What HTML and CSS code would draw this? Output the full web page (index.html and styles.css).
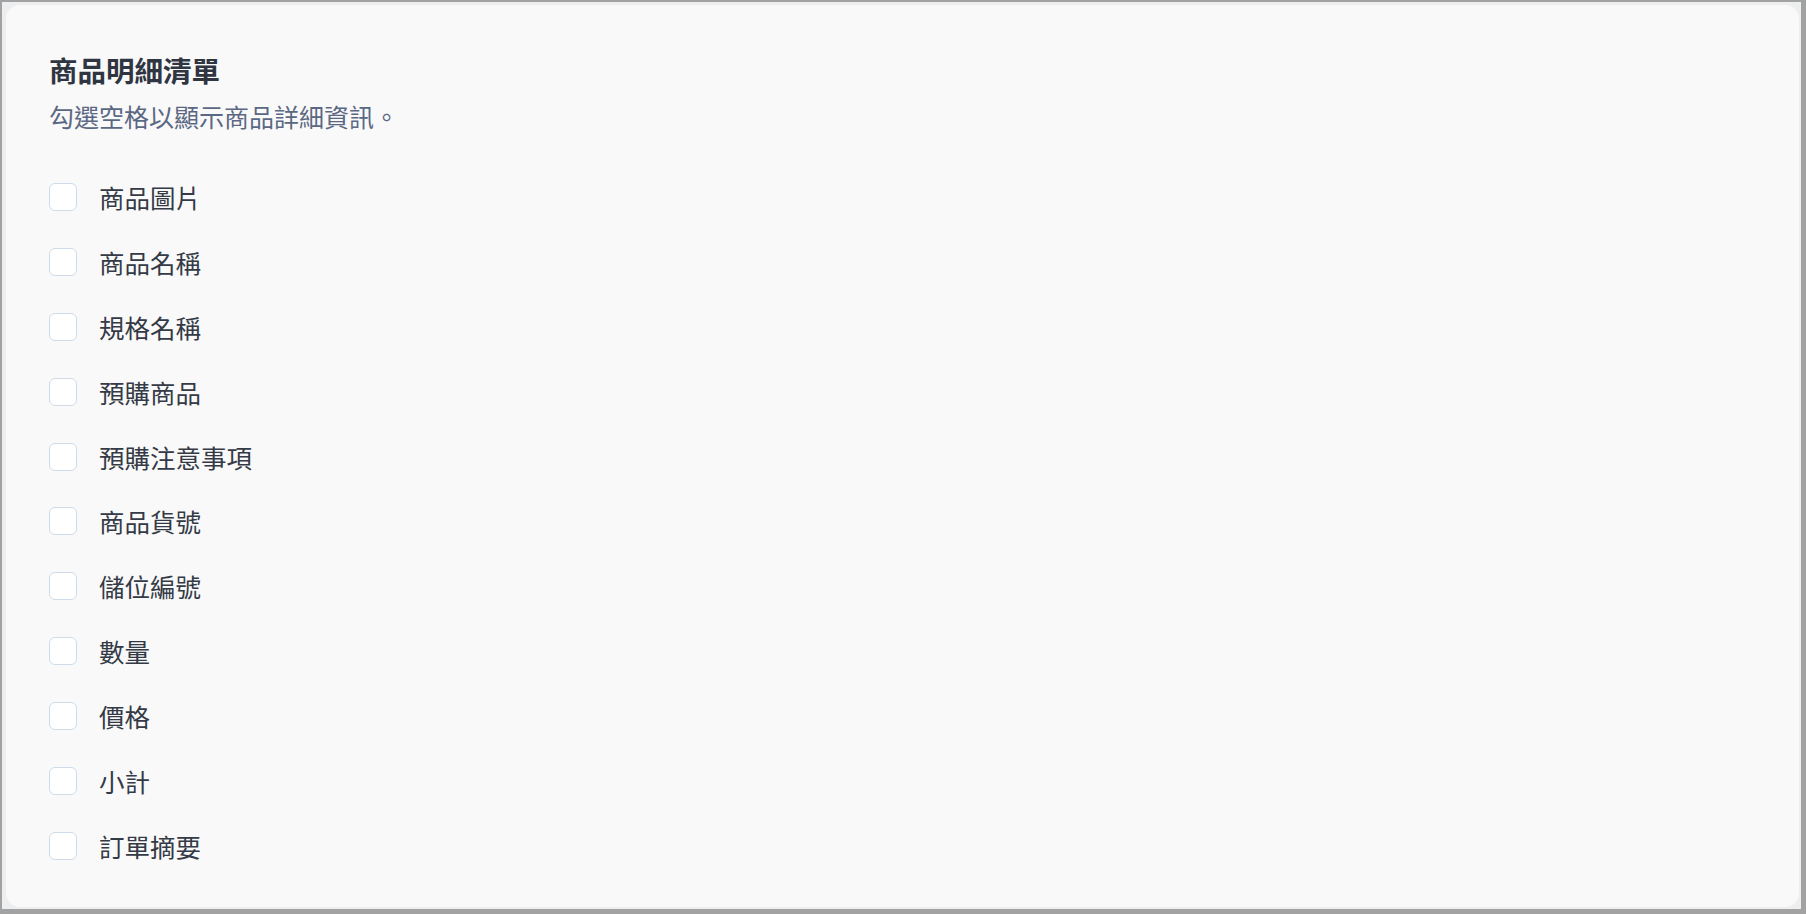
FILE: index.html
```html
<!DOCTYPE html>
<html lang="zh-Hant">
  <head>
    <meta charset="UTF-8" />
    <meta name="viewport" content="width=device-width, initial-scale=1.0" />
    <title>商品明細清單</title>
    <link rel="stylesheet" href="styles.css">
  </head>
  <body>
    <div class="shell">
      <div class="card">
        <h1 class="title">商品明細清單</h1>
        <p class="subtitle">勾選空格以顯示商品詳細資訊。</p>
        <ul class="field-list">
          <li class="field"><span class="box"></span><span class="label">商品圖片</span></li>
          <li class="field"><span class="box"></span><span class="label">商品名稱</span></li>
          <li class="field"><span class="box"></span><span class="label">規格名稱</span></li>
          <li class="field"><span class="box"></span><span class="label">預購商品</span></li>
          <li class="field"><span class="box"></span><span class="label">預購注意事項</span></li>
          <li class="field"><span class="box"></span><span class="label">商品貨號</span></li>
          <li class="field"><span class="box"></span><span class="label">儲位編號</span></li>
          <li class="field"><span class="box"></span><span class="label">數量</span></li>
          <li class="field"><span class="box"></span><span class="label">價格</span></li>
          <li class="field"><span class="box"></span><span class="label">小計</span></li>
          <li class="field"><span class="box"></span><span class="label">訂單摘要</span></li>
        </ul>
      </div>
    </div>
  </body>
</html>
```

FILE: styles.css
```css
html,
body {
  height: 100%;
}
body {
  margin: 0;
  padding: 2px 5px 5px 2px;
  box-sizing: border-box;
  background-color: #a2a2a2;
  font-family: "Noto Sans CJK TC", "Noto Sans", sans-serif;
}
.shell {
  height: 100%;
  box-sizing: border-box;
  padding: 3px 2px 2px 4px;
  background-color: #eceef0;
  display: flex;
}
.card {
  flex: 1;
  background-color: #f9f9f9;
  border-radius: 14px;
  padding: 47px 44px 44px 43px;
}
.title {
  margin: 0;
  font-size: 28.5px;
  line-height: 36px;
  font-weight: 700;
  color: #2f3541;
}
.subtitle {
  margin: 11px 0 0 0;
  font-size: 25px;
  line-height: 34px;
  color: #5b6883;
}

.field-list {
  list-style: none;
  margin: 46px 0 0 0;
  padding: 0;
  display: flex;
  flex-direction: column;
  gap: 28.9px;
}
.field {
  display: flex;
  align-items: center;
  height: 36px;
}
.box {
  width: 26px;
  height: 26px;
  border: 1px solid #cfdbe8;
  border-radius: 6px;
  background-color: #fff;
  flex-shrink: 0;
}
.label {
  margin-left: 22px;
  font-size: 25.5px;
  line-height: 36px;
  color: #343a46;
}
```
